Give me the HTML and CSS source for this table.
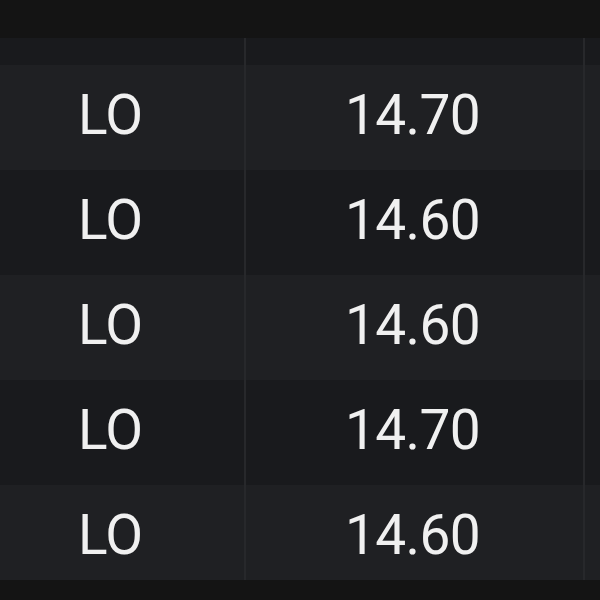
FILE: index.html
```html
<!DOCTYPE html>
<html>
<head>
<meta charset="utf-8">
<link rel="stylesheet" href="styles.css">
</head>
<body>
<div class="screen">
  <div class="topbar"></div>
  <div class="table">
    <div class="row row-dark row-partial">
      <div class="cell cell-type"></div>
      <div class="cell cell-price"></div>
      <div class="cell cell-rest"></div>
    </div>
    <div class="row row-light">
      <div class="cell cell-type">LO</div>
      <div class="cell cell-price">14.70</div>
      <div class="cell cell-rest"></div>
    </div>
    <div class="row row-dark">
      <div class="cell cell-type">LO</div>
      <div class="cell cell-price">14.60</div>
      <div class="cell cell-rest"></div>
    </div>
    <div class="row row-light">
      <div class="cell cell-type">LO</div>
      <div class="cell cell-price">14.60</div>
      <div class="cell cell-rest"></div>
    </div>
    <div class="row row-dark">
      <div class="cell cell-type">LO</div>
      <div class="cell cell-price">14.70</div>
      <div class="cell cell-rest"></div>
    </div>
    <div class="row row-light">
      <div class="cell cell-type">LO</div>
      <div class="cell cell-price">14.60</div>
      <div class="cell cell-rest"></div>
    </div>
  </div>
  <div class="bottombar"></div>
</div>
</body>
</html>
```

FILE: styles.css
```css
html, body {
  margin: 0;
  padding: 0;
  background: #131313;
}

.screen {
  position: relative;
  width: 600px;
  height: 600px;
  overflow: hidden;
  background: #131313;
  font-family: Roboto, "Noto Sans", sans-serif;
}

.topbar {
  height: 38px;
  background: #141414;
}

.table {
  display: flex;
  flex-direction: column;
}

.row {
  display: grid;
  grid-template-columns: 246px 339px 1fr;
  height: 105px;
}

.row-partial {
  height: 27px;
  background: #1b1c20;
}

.row-light {
  background: #1f2023;
}

.row-dark {
  background: #191a1d;
}

.cell {
  display: flex;
  align-items: center;
  box-sizing: border-box;
  padding-bottom: 4px;
  color: #f0f0f0;
  font-size: 55px;
  letter-spacing: -0.6px;
  line-height: 1;
  border-right: 2px solid #27282b;
}

.cell-type {
  padding-left: 78px;
}

.cell-price {
  justify-content: center;
  padding-right: 4px;
}

.cell-rest {
  border-right: none;
}

.bottombar {
  position: absolute;
  left: 0;
  right: 0;
  bottom: 0;
  height: 20px;
  background: #141414;
}
```
